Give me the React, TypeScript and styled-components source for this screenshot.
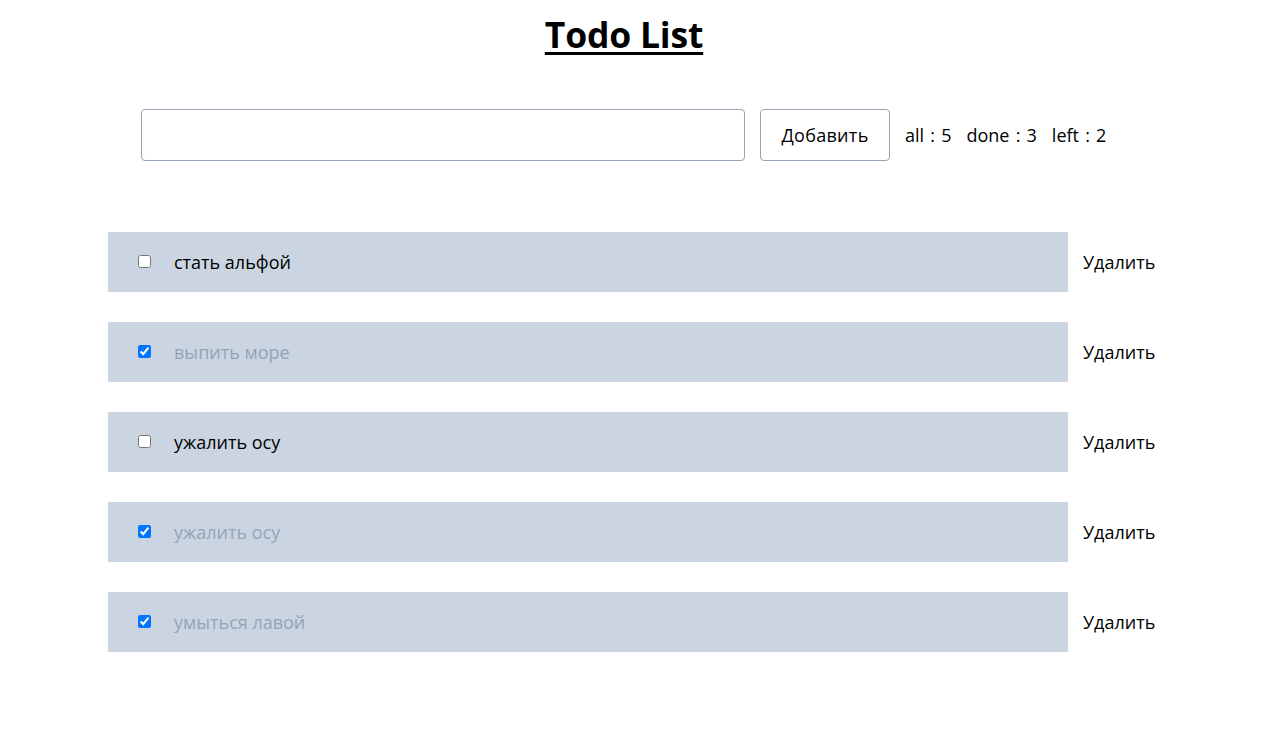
import React from "react";
import styled, { createGlobalStyle } from "styled-components";

const GlobalStyle = createGlobalStyle`
  html, body { margin: 0; padding: 0; background: #ffffff; }
  body { font-family: "Open Sans", "Noto Sans", "Liberation Sans", sans-serif; color: #000; }
`;

const Page = styled.main`
  width: 1248px;
  display: flex;
  flex-direction: column;
  align-items: center;
  padding-top: 9px;
`;

const Title = styled.h1`
  margin: 0;
  font-size: 35.5px;
  font-weight: 700;
  line-height: 50px;
  text-decoration: underline;
  text-decoration-thickness: 3px;
  text-underline-offset: 4px;
  letter-spacing: -0.2px;
`;

const Toolbar = styled.div`
  margin-top: 50px;
  display: flex;
  align-items: center;
  gap: 15px;
`;

const TextInput = styled.input`
  box-sizing: border-box;
  width: 604px;
  height: 52px;
  border: 1px solid #94a3b8;
  border-radius: 4px;
  padding: 0 12px;
  font: inherit;
  font-size: 18px;
  outline: none;
`;

const AddButton = styled.button`
  box-sizing: border-box;
  width: 130px;
  height: 52px;
  border: 1px solid #94a3b8;
  border-radius: 4px;
  background: #ffffff;
  font-family: inherit;
  font-size: 18px;
  letter-spacing: 0.3px;
  color: #000;
  cursor: pointer;
`;

const Stats = styled.div`
  display: flex;
  gap: 15px;
  font-size: 18px;
  word-spacing: 1.5px;
  width: 202px;
`;

const List = styled.ul`
  list-style: none;
  margin: 71px 0 0;
  padding: 0 0 0 108px;
  align-self: stretch;
  display: flex;
  flex-direction: column;
  gap: 30px;
`;

const Item = styled.li`
  display: flex;
  align-items: center;
`;

const Card = styled.label<{ $done: boolean }>`
  box-sizing: border-box;
  width: 960px;
  height: 60px;
  background: #cbd5e1;
  display: flex;
  align-items: center;
  padding-left: 26px;
  gap: 20px;
  font-size: 18px;
  color: ${(p) => (p.$done ? "#94a3b8" : "#000000")};
`;

const Check = styled.input`
  width: 13px;
  height: 13px;
  margin: 3px 3px 5px 4px;
`;

const DeleteButton = styled.button`
  margin-left: 15px;
  padding: 0;
  border: none;
  background: transparent;
  font-family: inherit;
  font-size: 18px;
  color: #000;
  cursor: pointer;
`;

const todos = [
  { text: "стать альфой", done: false },
  { text: "выпить море", done: true },
  { text: "ужалить осу", done: false },
  { text: "ужалить осу", done: true },
  { text: "умыться лавой", done: true },
];

export default function App() {
  const done = todos.filter((t) => t.done).length;
  return (
    <>
      <GlobalStyle />
      <Page>
        <Title>Todo List</Title>
        <Toolbar>
          <TextInput type="text" />
          <AddButton>Добавить</AddButton>
          <Stats>
            <span>all : {todos.length}</span>
            <span>done : {done}</span>
            <span>left : {todos.length - done}</span>
          </Stats>
        </Toolbar>
        <List>
          {todos.map((t, i) => (
            <Item key={i}>
              <Card $done={t.done}>
                <Check type="checkbox" defaultChecked={t.done} />
                <span>{t.text}</span>
              </Card>
              <DeleteButton>Удалить</DeleteButton>
            </Item>
          ))}
        </List>
      </Page>
    </>
  );
}
